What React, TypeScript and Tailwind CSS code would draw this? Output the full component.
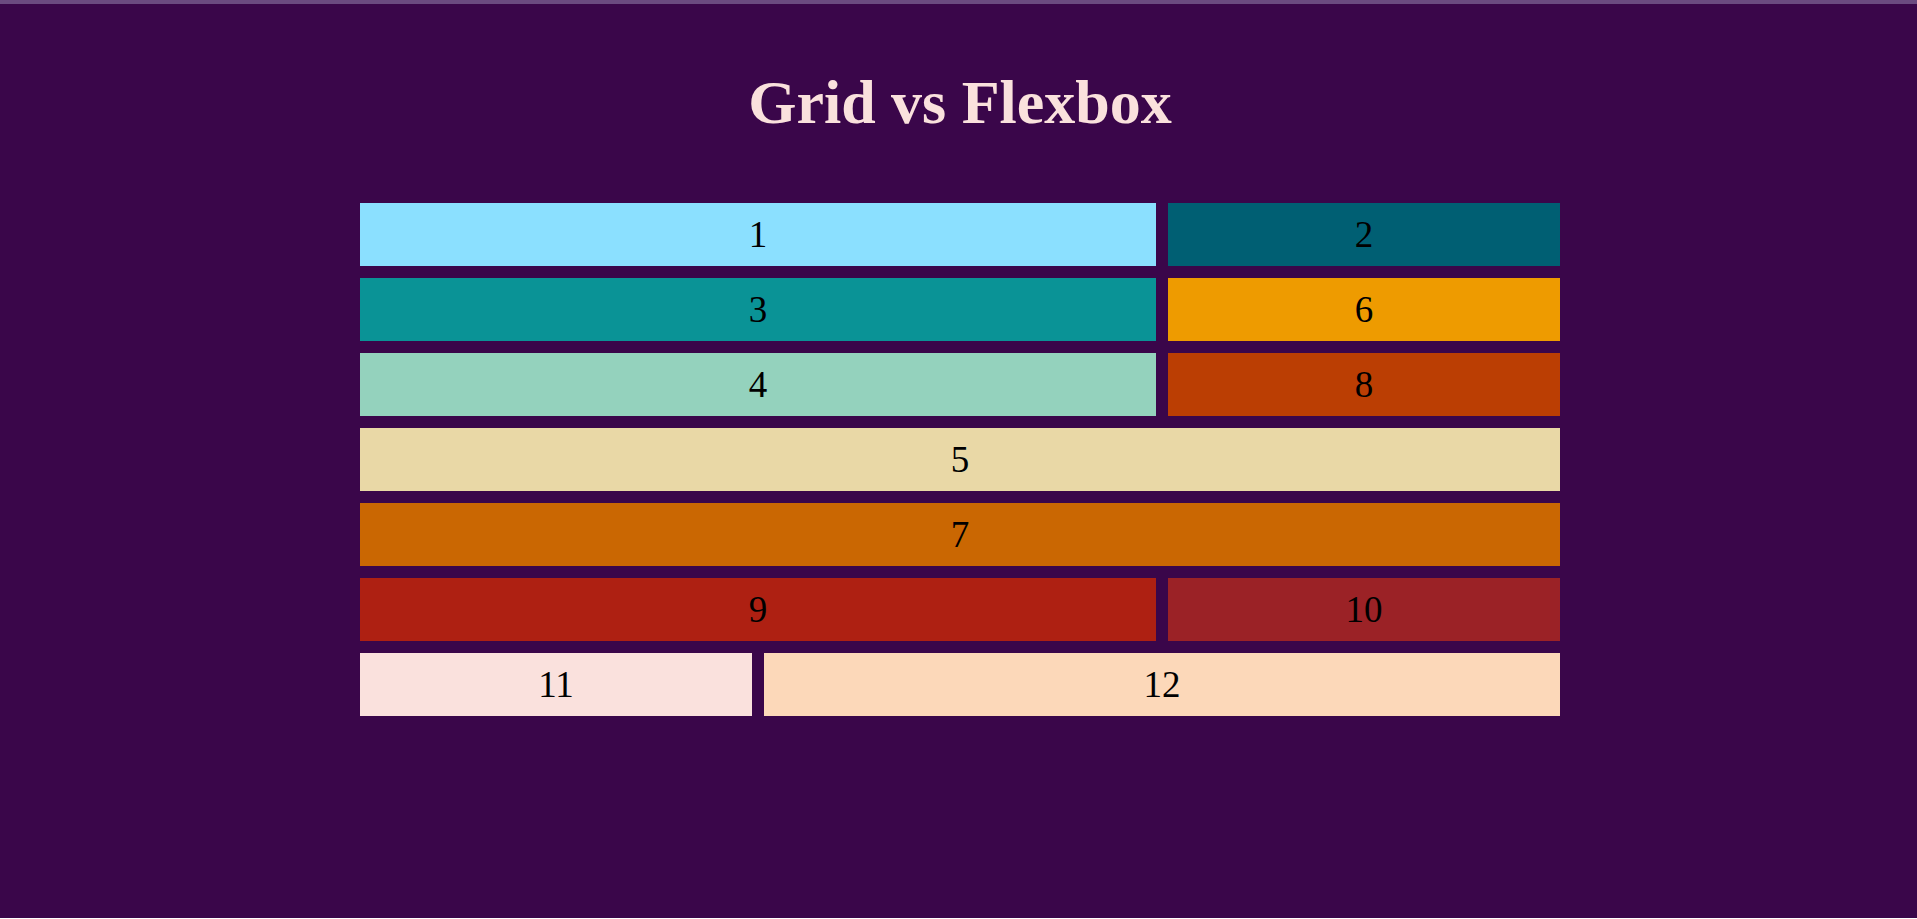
type Tile = { id: number; className: string };

const tiles: Tile[] = [
  { id: 1, className: "col-span-2 bg-[#8be0ff]" },
  { id: 2, className: "bg-[#005f73]" },
  { id: 3, className: "col-span-2 bg-[#0a9396]" },
  { id: 6, className: "bg-[#ee9b00]" },
  { id: 4, className: "col-span-2 bg-[#94d2bd]" },
  { id: 8, className: "bg-[#bb3e03]" },
  { id: 5, className: "col-span-3 bg-[#e9d8a6]" },
  { id: 7, className: "col-span-3 bg-[#ca6702]" },
  { id: 9, className: "col-span-2 bg-[#ae2012]" },
  { id: 10, className: "bg-[#9b2226]" },
  { id: 11, className: "bg-[#fae1dd]" },
  { id: 12, className: "col-span-2 bg-[#fcd8b9]" },
];

export default function App() {
  return (
    <div className="flex min-h-screen flex-col bg-white font-['Liberation_Serif',serif]">
      <div className="h-1 shrink-0 bg-[#6b4a80]" />
      <main className="flex-1 bg-[#3a064a] pt-[63px] pr-6 pl-[27px]">
        <h1 className="text-center text-[62px] leading-[70px] font-bold text-[#fae1dd]">Grid vs Flexbox</h1>
        <section className="mx-auto mt-[66px] grid max-w-[1200px] grid-cols-3 gap-3 text-center text-[37px] leading-[43px] text-black">
          {tiles.map(({ id, className }) => (
            <div key={id} className={`py-[10px] ${className}`}>
              {id}
            </div>
          ))}
        </section>
      </main>
      <div className="h-px shrink-0 bg-white" />
    </div>
  );
}
